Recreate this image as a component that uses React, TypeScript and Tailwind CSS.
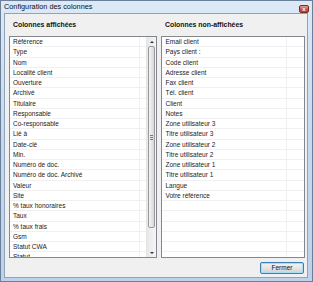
import React from 'react'

const shown = [
  'Référence',
  'Type',
  'Nom',
  'Localité client',
  'Ouverture',
  'Archivé',
  'Titulaire',
  'Responsable',
  'Co-responsable',
  'Lié à',
  'Date-clé',
  'Min.',
  'Numéro de doc.',
  'Numéro de doc. Archivé',
  'Valeur',
  'Site',
  '% taux honoraires',
  'Taux',
  '% taux frais',
  'Gsm',
  'Statut CWA',
  'Statut',
]

const hidden = [
  'Email client',
  'Pays client :',
  'Code client',
  'Adresse client',
  'Fax client',
  'Tél. client',
  'Client',
  'Notes',
  'Zone utilisateur 3',
  'Titre utilisateur 3',
  'Zone utilisateur 2',
  'Titre utilisateur 2',
  'Zone utilisateur 1',
  'Titre utilisateur 1',
  'Langue',
  'Votre référence',
  '', '', '', '', '', '', '',
]

/* ── one grid row of a list view ── */
function Row({ label, extraW }: { label: string; extraW: string }) {
  return (
    <div className="flex h-[10.25px] shrink-0 border-b border-[#f0f0f0]">
      <div className="flex-1 pl-[3px] text-[6.5px] leading-[10px] text-[#1a1a1a] whitespace-nowrap overflow-hidden">
        {label}
      </div>
      <div className={`${extraW} border-l border-[#f0f0f0]`} />
    </div>
  )
}

/* ── vertical scrollbar (Win7 style) ── */
function ScrollBar() {
  return (
    <div className="w-[10px] flex flex-col bg-gradient-to-r from-[#e8e8e8] to-[#f4f4f4] border-l border-[#e4e4e4]">
      <div className="h-[9px] flex items-center justify-center">
        <div className="w-0 h-0 border-l-[2px] border-r-[2px] border-b-[2px] border-l-transparent border-r-transparent border-b-[#333]" />
      </div>
      <div className="mx-[1px] h-[182px] rounded-[2px] border border-[#9a9a9a] bg-gradient-to-r from-[#f4f4f4] via-[#e6e6e6] to-[#d6d6d6] flex items-center justify-center">
        <div className="flex flex-col gap-[1px]">
          <div className="w-[3px] h-px bg-[#777]" />
          <div className="w-[3px] h-px bg-[#777]" />
          <div className="w-[3px] h-px bg-[#777]" />
        </div>
      </div>
      <div className="flex-1" />
      <div className="h-[9px] flex items-center justify-center">
        <div className="w-0 h-0 border-l-[2px] border-r-[2px] border-t-[2px] border-l-transparent border-r-transparent border-t-[#333]" />
      </div>
    </div>
  )
}

export default function App() {
  return (
    <div
      className="w-[313px] h-[282px] flex flex-col bg-gradient-to-b from-[#dce9f7] via-[#c6d9ef] to-[#bdd2ea] border border-[#6b7f99] overflow-hidden"
      style={{ fontFamily: '"Liberation Sans", Arial, sans-serif' }}
    >
      {/* title bar */}
      <div className="h-[12px] flex items-center justify-between pl-[3px] pr-[3px]">
        <span className="text-[7.3px] text-[#111]">Configuration des colonnes</span>
        <div className="mt-[4px] w-[10px] h-[8px] rounded-[2px] border border-[#7a2a22] bg-gradient-to-b from-[#e8a08f] via-[#d0553f] to-[#c33c25] flex items-center justify-center">
          <span className="text-[6px] leading-none font-bold text-white">x</span>
        </div>
      </div>

      {/* client area */}
      <div className="flex-1 mx-[3px] mb-[3px] mr-[4px] border border-[#8fa3bb] bg-[#f0f0f0] flex flex-col">
        <div className="flex h-[22px] items-center">
          <div className="w-[153px] pl-[8px] text-[6.9px] font-bold text-[#111]">Colonnes affichées</div>
          <div className="pl-[7px] text-[6.9px] font-bold text-[#111]">Colonnes non-affichées</div>
        </div>

        <div className="flex gap-[4px] pl-[4px] pr-[2px] h-[222px]">
          <div className="w-[149px] flex border border-[#828790] bg-white overflow-hidden">
            <div className="flex-1 flex flex-col overflow-hidden">
              {shown.map((s, i) => (
                <Row key={i} label={s} extraW="w-[7px]" />
              ))}
            </div>
            <ScrollBar />
          </div>

          <div className="w-[144px] flex flex-col border border-[#828790] bg-white overflow-hidden">
            {hidden.map((s, i) => (
              <Row key={i} label={s} extraW="w-[18px]" />
            ))}
          </div>
        </div>

        <div className="flex justify-end pr-[3px] pt-[4px]">
          <button className="w-[44px] h-[12px] rounded-[2px] border border-[#3c7fb1] bg-gradient-to-b from-[#f2f2f2] via-[#e6e6e6] to-[#cfcfcf] shadow-[inset_0_0_0_1px_#a8dcf5] text-[6.5px] leading-none text-[#111]">
            Fermer
          </button>
        </div>
      </div>
    </div>
  )
}
